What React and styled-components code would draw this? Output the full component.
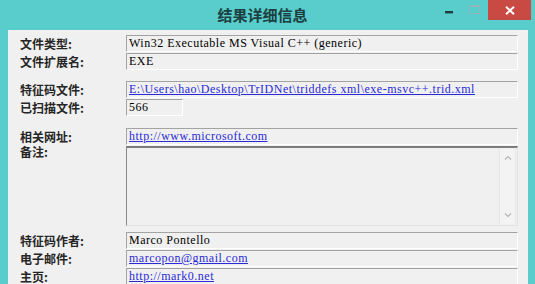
import React from "react";
import styled, { createGlobalStyle } from "styled-components";

const Global = createGlobalStyle`
  html, body { margin: 0; padding: 0; overflow: hidden; }
  body { width: 535px; height: 284px; background: #59cccc; }
`;

const Window = styled.div`
  width: 535px;
  height: 284px;
  background: #59cccc;
  display: flex;
  flex-direction: column;
  overflow: hidden;
`;

const TitleBar = styled.div`
  height: 30px;
  flex: 0 0 30px;
  display: flex;
  align-items: flex-start;
`;

const Title = styled.div`
  flex: 1;
  height: 30px;
  padding-left: 88px;
  display: flex;
  align-items: center;
  justify-content: center;
  font-family: "Noto Sans CJK SC", sans-serif;
  font-size: 15px;
  font-weight: 600;
  color: #1b4040;
  padding-bottom: 2px;
  box-sizing: border-box;
`;

const Controls = styled.div`
  display: flex;
  margin-right: 4px;
`;

const CtrlButton = styled.div`
  width: ${(p) => p.$w}px;
  height: 20px;
  display: flex;
  align-items: center;
  justify-content: center;
  background: ${(p) => p.$bg || "transparent"};
`;

const Body = styled.div`
  flex: 1;
  margin: 0 7px 0 8px;
  background: #f0f0f0;
  padding: 5px 10px 0 12px;
  display: flex;
  flex-direction: column;
`;

const Group = styled.div`
  display: flex;
  flex-direction: column;
  gap: 1px;
  margin-top: ${(p) => p.$mt || 0}px;
`;

const Row = styled.div`
  display: grid;
  grid-template-columns: 106px 1fr;
  align-items: ${(p) => (p.$top ? "start" : "center")};
`;

const Label = styled.div`
  font-family: "Noto Sans CJK SC", sans-serif;
  font-size: 12px;
  font-weight: 600;
  color: #262626;
  line-height: ${(p) => p.$lh || 14}px;
  white-space: nowrap;
`;

const Field = styled.div`
  box-sizing: border-box;
  height: 17px;
  width: ${(p) => (p.$w ? p.$w + "px" : "auto")};
  border-top: 1px solid #a3a3a3;
  border-left: 1px solid #a3a3a3;
  border-right: 1px solid #ffffff;
  border-bottom: 1px solid #ffffff;
  padding-left: 2px;
  display: flex;
  align-items: center;
  font-family: "Liberation Serif", serif;
  font-size: 12px;
  letter-spacing: 0.5px;
  color: #000;
  white-space: nowrap;
  overflow: hidden;
`;

const Link = styled.span`
  color: #2a2ad8;
  text-decoration: underline;
`;

const Memo = styled.div`
  box-sizing: border-box;
  height: 80px;
  border-top: 2px solid #7d7d7d;
  border-left: 1px solid #8a8a8a;
  border-right: 1px solid #e2e2e2;
  border-bottom: 1px solid #e2e2e2;
  display: flex;
  justify-content: flex-end;
`;

const ScrollBar = styled.div`
  width: 15px;
  margin: 1px 1px 1px 0;
  border-left: 1px solid #e6e6e6;
  border-right: 1px solid #e6e6e6;
  background: #f3f3f3;
  display: flex;
  flex-direction: column;
  justify-content: space-between;
  align-items: center;
  padding: 6px 0 6px;
`;

const Chevron = ({ up }) => (
  <svg width="8" height="5" viewBox="0 0 8 5">
    <path
      d={up ? "M1 4.5 L4 1.5 L7 4.5" : "M1 0.5 L4 3.5 L7 0.5"}
      fill="none"
      stroke="#b4b4b4"
      strokeWidth="1.2"
    />
  </svg>
);

export default function App() {
  return (
    <>
      <Global />
      <Window>
        <TitleBar>
          <Title>结果详细信息</Title>
          <Controls>
            <CtrlButton $w={24}>
              <svg width="8" height="3" viewBox="0 0 8 3" style={{ marginTop: 4 }}>
                <rect x="0" y="0" width="8" height="2.4" fill="#1f3f3f" />
              </svg>
            </CtrlButton>
            <CtrlButton $w={27}>
              <svg width="11" height="9" viewBox="0 0 11 9" style={{ marginBottom: 1 }}>
                <rect x="0.5" y="0.5" width="10" height="8" fill="none" stroke="#8fb7c0" strokeWidth="1" />
                <rect x="0.5" y="0.5" width="10" height="1.5" fill="#8fb7c0" />
              </svg>
            </CtrlButton>
            <CtrlButton $w={43} $bg="#c94a42">
              <svg width="10" height="9" viewBox="0 0 10 9">
                <path d="M1 0.8 L9 8.2 M9 0.8 L1 8.2" stroke="#ffffff" strokeWidth="2" />
              </svg>
            </CtrlButton>
          </Controls>
        </TitleBar>
        <Body>
          <Group>
            <Row>
              <Label>文件类型:</Label>
              <Field>Win32 Executable MS Visual C++ (generic)</Field>
            </Row>
            <Row>
              <Label>文件扩展名:</Label>
              <Field>EXE</Field>
            </Row>
          </Group>
          <Group $mt={11}>
            <Row>
              <Label>特征码文件:</Label>
              <Field>
                <Link>E:\Users\hao\Desktop\TrIDNet\triddefs xml\exe-msvc++.trid.xml</Link>
              </Field>
            </Row>
            <Row>
              <Label>已扫描文件:</Label>
              <Field $w={57}>566</Field>
            </Row>
          </Group>
          <Group $mt={12}>
            <Row>
              <Label>相关网址:</Label>
              <Field>
                <Link>http://www.microsoft.com</Link>
              </Field>
            </Row>
            <Row $top>
              <Label $lh={12}>备注:</Label>
              <Memo>
                <ScrollBar>
                  <Chevron up />
                  <Chevron />
                </ScrollBar>
              </Memo>
            </Row>
          </Group>
          <Group $mt={6}>
            <Row>
              <Label>特征码作者:</Label>
              <Field>Marco Pontello</Field>
            </Row>
            <Row>
              <Label>电子邮件:</Label>
              <Field>
                <Link>marcopon@gmail.com</Link>
              </Field>
            </Row>
            <Row>
              <Label>主页:</Label>
              <Field>
                <Link>http://mark0.net</Link>
              </Field>
            </Row>
          </Group>
        </Body>
      </Window>
    </>
  );
}
